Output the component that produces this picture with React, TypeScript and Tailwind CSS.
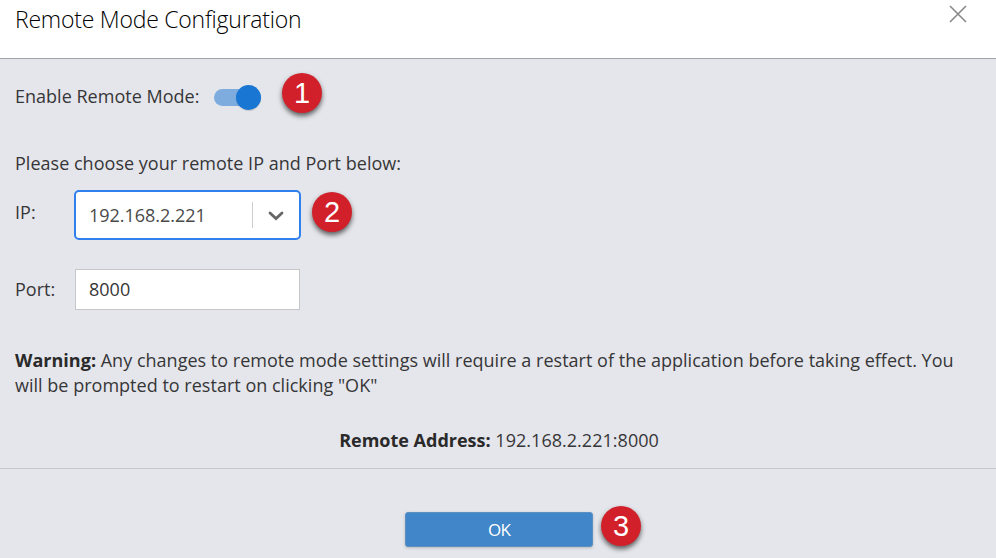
import React from 'react';

function Badge({ n }: { n: string }) {
  return (
    <div className="flex size-10 shrink-0 items-center justify-center rounded-full bg-[#d2202b] pt-px font-['Liberation_Sans',sans-serif] text-[29px] leading-none tracking-normal text-white shadow-[0px_3px_5px_rgba(0,0,0,0.6)]">
      {n}
    </div>
  );
}

export default function App() {
  return (
    <div className="flex h-[558px] w-[996px] flex-col overflow-hidden bg-[#e5e6eb] font-['Open_Sans',sans-serif] text-[18px] leading-[25px] tracking-[0.015px] text-[#363638]">
      <header className="flex h-[59px] shrink-0 items-start justify-between border-b border-[#a2a3a7] bg-white pl-[15px] pr-[29px]">
        <h1 className="mt-[4px] whitespace-nowrap text-[23px] font-light leading-[30px] tracking-[-0.23px] text-black">Remote Mode Configuration</h1>
        <svg className="mt-[5px]" width="18" height="18" viewBox="0 0 18 18" fill="none" stroke="#888" strokeWidth="1.6"><path d="M1 1 17 17M17 1 1 17" /></svg>
      </header>
      <main className="flex h-[410px] shrink-0 flex-col border-b border-[#c6c7cb] px-[15px]">
        <div className="mt-[14px] flex h-[40px] items-center">
          <span className="mt-[7px] w-[199px] whitespace-nowrap">Enable Remote Mode:</span>
          <div className="mt-[9px] flex h-[17px] w-[47px] items-center justify-end rounded-full bg-[#7eacde]">
            <div className="size-[25px] shrink-0 rounded-full bg-[#1976d2] shadow-[0_1px_1px_rgba(0,0,0,0.12)]" />
          </div>
          <div className="ml-[21px]"><Badge n="1" /></div>
        </div>
        <p className="mt-[38px] whitespace-nowrap tracking-[0.02px]">Please choose your remote IP and Port below:</p>
        <div className="mt-[14px] flex h-[50px] items-center">
          <span className="-mt-[5px] w-[59px]">IP:</span>
          <div className="flex h-[50px] w-[227px] items-center rounded-[5px] border-2 border-[#2f80ed] bg-white pl-[13px]">
            <span className="flex-1 tracking-[-0.03px] text-[#4a4a4a]">192.168.2.221</span>
            <span className="h-[26px] w-px bg-[#ccc]" />
            <span className="flex w-[46px] justify-center">
              <svg className="mt-[2px]" width="16" height="10" viewBox="0 0 16 10" fill="none" stroke="#666" strokeWidth="2.8" strokeLinecap="round"><path d="m2 2 6 5.5L14 2" /></svg>
            </span>
          </div>
          <div className="-mt-[6px] ml-[11px]"><Badge n="2" /></div>
        </div>
        <div className="mt-[29px] flex h-[41px] items-center">
          <span className="w-[60px]">Port:</span>
          <div className="flex h-[41px] w-[225px] items-center border border-[#c6c6c9] bg-white pl-[13px] tracking-normal">8000</div>
        </div>
        <p className="mt-[38px] whitespace-nowrap"><b className="font-bold text-[#2a2a2a]">Warning:</b> Any changes to remote mode settings will require a restart of the application before taking effect. You<br />will be prompted to restart on clicking "OK"</p>
        <p className="mt-[30px] pl-[2px] text-center tracking-[0.03px]"><b className="font-bold tracking-normal text-[#2a2a2a]">Remote Address:</b> 192.168.2.221:8000</p>
      </main>
      <footer className="flex items-start pl-[405px] pt-[37px]">
        <button className="mt-[6px] h-[35px] w-[188px] rounded-[3px] border border-[#5c8fc2] bg-[#4086c8] text-[17px] tracking-[-0.8px] text-white shadow-[0_1px_3px_rgba(0,0,0,0.2)]">OK</button>
        <div className="ml-[8px]"><Badge n="3" /></div>
      </footer>
    </div>
  );
}
